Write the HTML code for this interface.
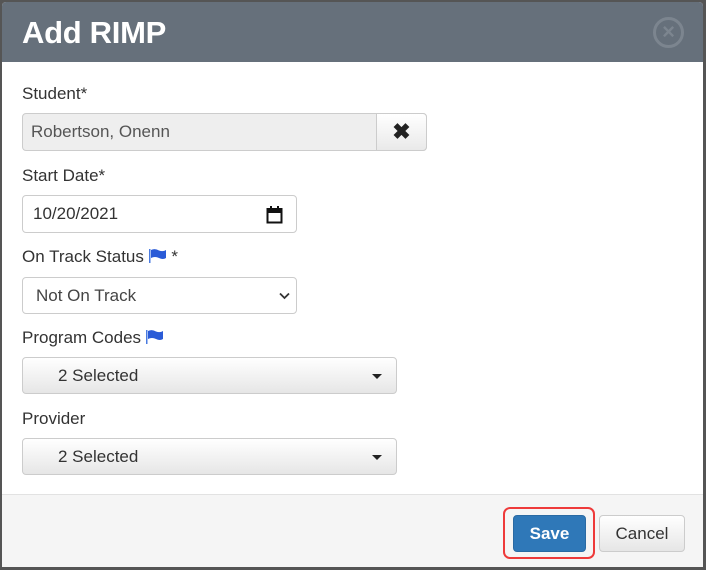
<!DOCTYPE html>
<html><head><meta charset="utf-8"><style>
*{box-sizing:border-box;margin:0;padding:0}
body{width:706px;height:570px;background:#555;font-family:"Liberation Sans",sans-serif;color:#333;position:relative;overflow:hidden}
.dlg{position:absolute;left:2px;top:2px;width:701px;height:565px;background:#fff;border-radius:4px 4px 0 0;overflow:hidden}
.hd{position:absolute;left:0;top:0;width:701px;height:60px;background:#66707b}
.hd h1{position:absolute;left:20px;top:13px;font-size:31px;font-weight:bold;color:#fff;letter-spacing:-0.3px}
.cls{position:absolute;left:651px;top:15px;width:31px;height:31px;border-radius:50%;border:3px solid #7c858f;color:#7c858f;font-weight:bold;font-size:22px;text-align:center;line-height:24px}
.lbl{position:absolute;left:20px;font-size:17px;color:#333}
.box{position:absolute;left:20px;border:1px solid #ccc;border-radius:4px;font-size:17px;color:#555}
.flag{display:inline-block;vertical-align:-1px}
.ft{position:absolute;left:0;top:492px;width:701px;height:73px;background:#f5f5f5;border-top:1px solid #e2e2e2}
.dd{background:linear-gradient(#fff,#e6e6e6);width:375px;height:37px}
.dd span{position:absolute;left:35px;top:8px;color:#333}
.caret{position:absolute;right:14px;top:16px;width:0;height:0;border-left:5px solid transparent;border-right:5px solid transparent;border-top:5px solid #222}
</style></head><body>
<div class="dlg">
<div class="hd"><h1>Add RIMP</h1><div class="cls">×</div></div>
<div class="lbl" style="top:82px">Student*</div>
<div class="box" style="top:111px;width:405px;height:38px;background:#eee">
 <span style="position:absolute;left:8px;top:8px;color:#555">Robertson, Onenn</span>
 <div style="position:absolute;left:353px;top:-1px;width:51px;height:38px;border:1px solid #ccc;border-radius:0 4px 4px 0;background:linear-gradient(#fff,#e9e9e9);text-align:center;font-weight:bold;font-size:22px;line-height:36px;color:#222">✖</div>
</div>
<div class="lbl" style="top:164px">Start Date*</div>
<div class="box" style="top:193px;width:275px;height:38px"><span style="position:absolute;left:10px;top:8px;color:#333">10/20/2021</span>
<svg style="position:absolute;left:243px;top:10px" width="17" height="18" viewBox="0 0 17 18"><rect x="1.5" y="3" width="14" height="13.5" fill="none" stroke="#111" stroke-width="2"/><rect x="1.5" y="3" width="14" height="4" fill="#111"/><rect x="4" y="0" width="2" height="4" fill="#111"/><rect x="11" y="0" width="2" height="4" fill="#111"/></svg></div>
<div class="lbl" style="top:245px">On Track Status <svg class="flag" width="18" height="14" viewBox="0 0 18 14"><rect x="0" y="0" width="1.5" height="14" fill="#4a7be0"/><path d="M2 1 Q6 -1 10 1.5 Q14 3 17 1 V9 Q14 11 10 9 Q6 7 2 9Z" fill="#2a5bd7"/></svg> *</div>
<div class="box" style="top:275px;width:275px;height:37px"><span style="position:absolute;left:13px;top:8px;color:#444">Not On Track</span>
<svg style="position:absolute;left:256px;top:14px" width="11" height="8" viewBox="0 0 11 8"><path d="M1 1.5 L5.5 6 L10 1.5" fill="none" stroke="#333" stroke-width="1.8"/></svg></div>
<div class="lbl" style="top:326px">Program Codes <svg class="flag" width="18" height="14" viewBox="0 0 18 14"><rect x="0" y="0" width="1.5" height="14" fill="#4a7be0"/><path d="M2 1 Q6 -1 10 1.5 Q14 3 17 1 V9 Q14 11 10 9 Q6 7 2 9Z" fill="#2a5bd7"/></svg></div>
<div class="box dd" style="top:355px"><span>2 Selected</span><div class="caret"></div></div>
<div class="lbl" style="top:407px">Provider</div>
<div class="box dd" style="top:436px"><span>2 Selected</span><div class="caret"></div></div>
<div class="ft">
 <div style="position:absolute;left:501px;top:12px;width:92px;height:52px;border:2px solid #ee3a3a;border-radius:7px"></div>
 <div style="position:absolute;left:511px;top:20px;width:73px;height:37px;background:#2f78b8;border:1px solid #2a6aa3;border-radius:4px;color:#fff;font-weight:bold;font-size:17px;text-align:center;line-height:35px">Save</div>
 <div style="position:absolute;left:597px;top:20px;width:86px;height:37px;background:linear-gradient(#fff,#e6e6e6);border:1px solid #ccc;border-radius:4px;color:#333;font-size:17px;text-align:center;line-height:35px">Cancel</div>
</div>
</div>
</body></html>
